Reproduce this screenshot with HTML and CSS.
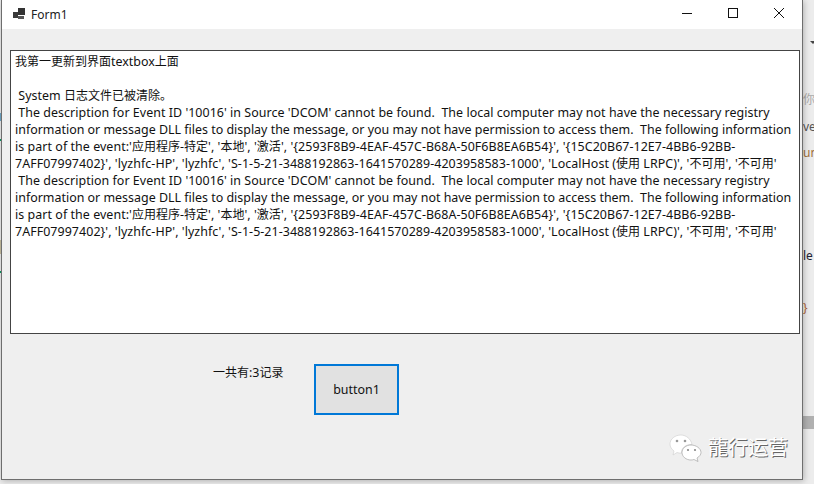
FILE: index.html
```html
<!DOCTYPE html>
<html lang="zh">
<head>
<meta charset="utf-8">
<title>Form1</title>
<link rel="stylesheet" href="styles.css">
</head>
<body>
<div class="desktop">
  <div class="peek p1">你A</div>
  <div class="peek p2">ve</div>
  <div class="peek p3">un</div>
  <div class="peek p4">le</div>
  <div class="peek p5">}</div>
  <div class="caret"></div>
  <div class="scroll"></div>
  <div class="edge blue"></div>
  <div class="edge green1"></div>
  <div class="edge tan"></div>
  <div class="edge green2"></div>
  <div class="window">
    <header class="titlebar">
      <svg class="appicon" width="14" height="14" viewBox="0 0 14 14"><rect x="1" y="4" width="5" height="6" fill="#3a3a3a"/><rect x="6" y="0" width="7" height="7" fill="#333"/><rect x="6" y="8" width="6" height="3" fill="#555"/></svg>
      <span class="title">Form1</span>
      <div class="controls">
        <svg class="ctl" width="46" height="29" viewBox="0 0 46 29"><path d="M18 13.500h10" stroke="#111" fill="none"/></svg>
        <svg class="ctl" width="46" height="29" viewBox="0 0 46 29"><rect x="18.500" y="8.500" width="9" height="9" stroke="#111" fill="none"/></svg>
        <svg class="ctl" width="46" height="29" viewBox="0 0 46 29"><path d="M18 8l10 10M28 8L18 18" stroke="#111" fill="none"/></svg>
      </div>
    </header>
    <main class="client">
      <div class="textbox">
        <div class="ln"><span class="c">我第一更新到界面</span>textbox<span class="c">上面</span></div>
        <div class="ln">&nbsp;</div>
        <div class="ln a">&nbsp;System <span class="c">日志文件已被清除。</span></div>
        <div class="ln a">&nbsp;The description for Event ID '10016' in Source 'DCOM' cannot be found.&nbsp; The local computer may not have the necessary registry</div>
        <div class="ln">information or message DLL files to display the message, or you may not have permission to access them.&nbsp; The following information</div>
        <div class="ln b">is part of the event:'<span class="c">应用程序</span>-<span class="c">特定</span>', '<span class="c">本地</span>', '<span class="c">激活</span>', '{2593F8B9-4EAF-457C-B68A-50F6B8EA6B54}', '{15C20B67-12E7-4BB6-92BB-</div>
        <div class="ln b">7AFF07997402}', 'lyzhfc-HP', 'lyzhfc', 'S-1-5-21-3488192863-1641570289-4203958583-1000', 'LocalHost (<span class="c">使用</span> LRPC)', '<span class="c">不可用</span>', '<span class="c">不可用</span>'</div>
        <div class="ln a">&nbsp;The description for Event ID '10016' in Source 'DCOM' cannot be found.&nbsp; The local computer may not have the necessary registry</div>
        <div class="ln">information or message DLL files to display the message, or you may not have permission to access them.&nbsp; The following information</div>
        <div class="ln b">is part of the event:'<span class="c">应用程序</span>-<span class="c">特定</span>', '<span class="c">本地</span>', '<span class="c">激活</span>', '{2593F8B9-4EAF-457C-B68A-50F6B8EA6B54}', '{15C20B67-12E7-4BB6-92BB-</div>
        <div class="ln b">7AFF07997402}', 'lyzhfc-HP', 'lyzhfc', 'S-1-5-21-3488192863-1641570289-4203958583-1000', 'LocalHost (<span class="c">使用</span> LRPC)', '<span class="c">不可用</span>', '<span class="c">不可用</span>'</div>
      </div>
      <div class="actions">
        <span class="count"><span class="c">一共有</span>:3<span class="c">记录</span></span>
        <button class="btn">button1</button>
      </div>
    </main>
  </div>
  <div class="watermark">
    <svg width="33" height="28" viewBox="0 0 33 28">
      <path d="M12 1C6 1 1 5 1 10c0 3 1.500 5 4 7l-1 4 4-2.500c1.500.5 3 .7 4.500.7C12 14 17 10 23 10.500 22 5 17 1 12 1z" fill="#fff" stroke="#ccc" stroke-width=".6"/>
      <path d="M22 11c-5 0-9 3.400-9 7.500S17 26 22 26c1 0 2-.2 3-.5l4 2-1-3.500c2.500-1.500 4-3.500 4-5.500 0-4.100-5-7.500-10-7.500z" fill="#fff" stroke="#999" stroke-width=".6"/>
      <circle cx="8" cy="7" r="1.300" fill="#999"/><circle cx="16" cy="7" r="1.300" fill="#999"/>
      <circle cx="19" cy="16" r="1.100" fill="#888"/><circle cx="26" cy="16" r="1.100" fill="#888"/>
    </svg>
    <span class="wmtext">龍行运营</span>
  </div>
</div>
</body>
</html>
```
FILE: styles.css
```css
* { box-sizing: border-box; }
html, body { margin: 0; padding: 0; }
body { width: 814px; height: 484px; overflow: hidden; }
.desktop { position: relative; width: 814px; height: 484px; background: #ececec; overflow: hidden; font-family: "Noto Sans", "Noto Sans CJK SC", sans-serif; }
.window { position: absolute; left: 1px; top: 0; width: 802px; height: 480px; border: 1px solid #6e6e6e; border-top: 0; background: #efefef; display: flex; flex-direction: column; box-shadow: 1px 1px 6px rgba(0,0,0,.25); }
.titlebar { height: 29px; background: #fff; display: flex; align-items: center; padding-left: 10px; flex: none; }
.appicon { margin-right: 5px; }
.title { font-size: 12px; color: #222; }
.controls { margin-left: auto; display: flex; }
.ctl { display: block; }
.client { flex: 1; display: flex; flex-direction: column; padding: 21px 2px 0 8px; }
.textbox { height: 284px; border: 1px solid #444; background: #fff; padding: 2px 0 0 4px; font-size: 12.45px; line-height: 17px; color: #111; }
.ln { white-space: nowrap; }
.a { letter-spacing: .04px; }
.b { letter-spacing: .055px; }
.c { font-size: 12px; letter-spacing: 0; }
.actions { display: flex; align-items: flex-start; padding: 30px 0 0 203px; }
.count { width: 101px; flex: none; font-size: 12.45px; line-height: 17px; color: #111; }
.btn { width: 85px; height: 51px; margin: 0; border: 2px solid #0078d7; background: #e1e1e1; font: 12.45px "Noto Sans", sans-serif; color: #111; padding: 0; }
.watermark { position: absolute; left: 669px; top: 434px; display: flex; align-items: center; gap: 6px; }
.wmtext { font-size: 20px; line-height: 28px; color: #fff; text-shadow: 1px 1px 0 #666; }
.peek { position: absolute; left: 803px; font-size: 12px; line-height: 14px; color: #555; white-space: nowrap; }
.p1 { top: 93px; color: #aaa; }
.p2 { top: 120px; }
.p3 { top: 146px; color: #a0703a; }
.p4 { top: 249px; color: #223; }
.p5 { top: 301px; color: #b0683a; }
.caret { position: absolute; left: 810px; top: 41px; border: 3px solid transparent; border-top-color: #444; }
.scroll { position: absolute; left: 803px; top: 416px; width: 11px; height: 13px; background: #b0b0b0; }
.edge { position: absolute; left: 0; width: 1px; }
.blue { top: 113px; height: 8px; background: #6fa8c8; }
.green1 { top: 139px; height: 2px; background: #0a9a60; }
.tan { top: 240px; height: 14px; background: #c8bfa0; }
.green2 { top: 271px; height: 2px; background: #0a9a60; }
```
